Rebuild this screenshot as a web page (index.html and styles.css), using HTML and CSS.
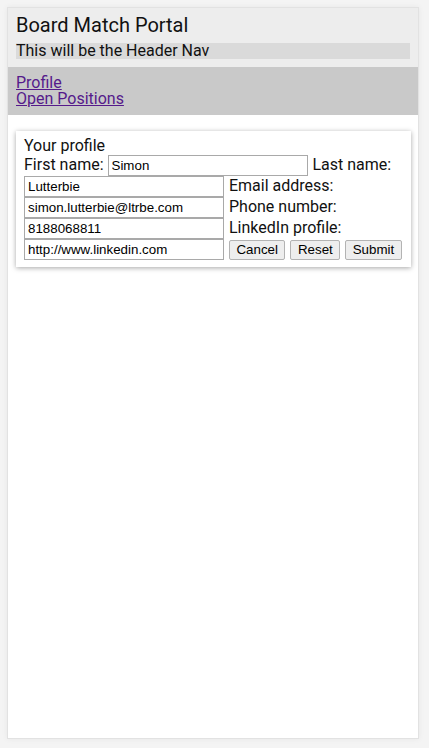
FILE: index.html
```html
<!DOCTYPE html>
<html>
<head>
<meta charset="utf-8">
<link rel="stylesheet" href="styles.css">
</head>
<body>
<div class="app">
  <header class="header">
    <div class="title">Board Match Portal</div>
    <div class="subnav">This will be the Header Nav</div>
  </header>
  <nav class="nav">
    <a class="nav-link" href="#profile">Profile</a>
    <a class="nav-link" href="#positions">Open Positions</a>
  </nav>
  <main class="main">
    <form class="card">
      <div class="card-title">Your profile</div>
      <div class="fields"><label class="lbl">First name:</label> <input class="field" type="text" value="Simon"> <label class="lbl">Last name:</label> <input class="field" type="text" value="Lutterbie"> <label class="lbl">Email address:</label> <input class="field" type="text" value="simon.lutterbie@ltrbe.com"> <label class="lbl">Phone number:</label> <input class="field" type="text" value="8188068811"> <label class="lbl">LinkedIn profile:</label> <input class="field" type="text" value="http://www.linkedin.com"> <button class="btn" type="button">Cancel</button> <button class="btn" type="button">Reset</button> <button class="btn" type="button">Submit</button></div>
    </form>
  </main>
</div>
</body>
</html>
```
FILE: styles.css
```css
html, body {
  margin: 0;
  padding: 0;
}
body {
  background: #f4f4f4;
  font-family: Roboto, "Liberation Sans", sans-serif;
  font-size: 16px;
  color: #111;
}
.app {
  margin: 7px 10px 9px 7px;
  height: calc(100vh - 16px);
  box-sizing: border-box;
  border: 1px solid #e2e2e2;
  background: #fff;
  box-shadow: 0 0 6px rgba(0, 0, 0, 0.06);
  display: flex;
  flex-direction: column;
}
.header {
  background: #ededed;
  padding: 5px 8px 8px;
}
.title {
  font-size: 20px;
  line-height: 24px;
  margin-bottom: 6px;
}
.subnav {
  background: #dadada;
  line-height: 16px;
}
.nav {
  background: #c9c9c9;
  padding: 8px;
  display: flex;
  flex-direction: column;
  align-items: flex-start;
}
.nav-link {
  color: #551a8b;
  line-height: 16px;
}
.main {
  padding: 16px 7px 8px 8px;
}
.card {
  margin: 0;
  background: #fff;
  padding: 6px 7px 7px 8px;
  box-shadow: 0 1px 5px rgba(0, 0, 0, 0.35);
}
.card-title {
  line-height: 18px;
}
.field {
  box-sizing: border-box;
  width: 200px;
  height: 21px;
  margin: 0 1px 0 0;
  padding: 1px 3px;
  border: 1px solid #a9a9a9;
  border-radius: 0;
  font-family: "Liberation Sans", Arial, sans-serif;
  font-size: 13.33px;
  color: #000;
  background: #fff;
  vertical-align: baseline;
}
.btn {
  margin: 0;
  height: 20px;
  padding: 1px 6.5px;
  border: 1px solid #b3b3b3;
  border-radius: 2px;
  background: #eeeeee;
  font-family: "Liberation Sans", Arial, sans-serif;
  font-size: 13.33px;
  color: #000;
}
.btn + .btn {
  margin-left: 1px;
}
```
